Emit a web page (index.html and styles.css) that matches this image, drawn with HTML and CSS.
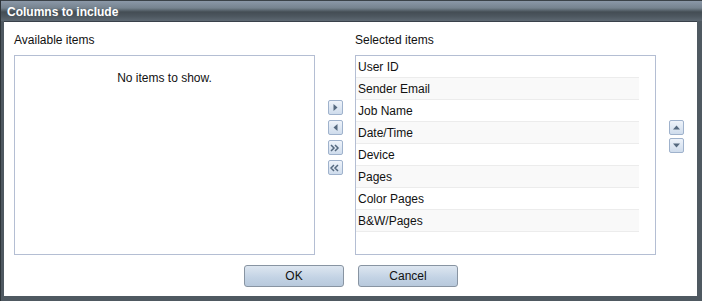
FILE: index.html
```html
<!DOCTYPE html>
<html lang="en">
<head>
    <meta charset="UTF-8">
    <title>Columns to include</title>
    <link rel="stylesheet" href="styles.css">
</head>
<body>

    <div class="dialog">
        <div class="titlebar">Columns to include</div>

        <div class="content">
            <div class="columns">
                <div class="col">
                    <div class="label">Available items</div>
                    <div class="list">
                        <div class="empty">No items to show.</div>
                    </div>
                </div>

                <div class="move-btns">
                    <button class="tool-btn" title="Add">
                        <svg width="7" height="9" viewBox="0 0 7 9"><path d="M1.5 1 L5.5 4.5 L1.5 8 Z" fill="#55697f"/></svg>
                    </button>
                    <button class="tool-btn" title="Remove">
                        <svg width="7" height="9" viewBox="0 0 7 9"><path d="M5.5 1 L1.5 4.5 L5.5 8 Z" fill="#55697f"/></svg>
                    </button>
                    <button class="tool-btn" title="Add all">
                        <svg width="10" height="8" viewBox="0 0 10 8"><path d="M1 1 L4 4 L1 7 M5 1 L8 4 L5 7" fill="none" stroke="#55697f" stroke-width="1.5"/></svg>
                    </button>
                    <button class="tool-btn" title="Remove all">
                        <svg width="10" height="8" viewBox="0 0 10 8"><path d="M4 1 L1 4 L4 7 M8 1 L5 4 L8 7" fill="none" stroke="#55697f" stroke-width="1.5"/></svg>
                    </button>
                </div>

                <div class="col">
                    <div class="label">Selected items</div>
                    <div class="list">
                        <div class="row">User ID</div>
                        <div class="row">Sender Email</div>
                        <div class="row">Job Name</div>
                        <div class="row">Date/Time</div>
                        <div class="row">Device</div>
                        <div class="row">Pages</div>
                        <div class="row">Color Pages</div>
                        <div class="row">B&amp;W/Pages</div>
                    </div>
                </div>

                <div class="order-btns">
                    <button class="tool-btn" title="Move up">
                        <svg width="9" height="7" viewBox="0 0 9 7"><path d="M1 5.5 L4.5 1.5 L8 5.5 Z" fill="#55697f"/></svg>
                    </button>
                    <button class="tool-btn" title="Move down">
                        <svg width="9" height="7" viewBox="0 0 9 7"><path d="M1 1.5 L4.5 5.5 L8 1.5 Z" fill="#55697f"/></svg>
                    </button>
                </div>
            </div>

            <div class="footer">
                <button class="btn">OK</button>
                <button class="btn">Cancel</button>
            </div>
        </div>
    </div>

</body>
</html>
```

FILE: styles.css
```css
body {
    margin: 0;
    font-family: "Liberation Sans", Arial, sans-serif;
    font-size: 12px;
    background: #6b747c;
}
.dialog {
    width: 702px;
    height: 301px;
    box-sizing: border-box;
    background: #4f5961;
    border-left: 1px solid #2e353a;
    padding: 0 5px 5px 3px;
    display: flex;
    flex-direction: column;
}
.titlebar {
    height: 21px;
    line-height: 22px;
    margin: 0 -5px 0 -3px;
    padding-left: 6px;
    color: #fff;
    font-weight: bold;
    font-size: 12px;
    background: linear-gradient(#8b98a8 0%, #76838f 35%, #444d54 55%, #4c565e 75%, #5d6872 100%);
    border-top: 1px solid #3b4248;
    box-sizing: border-box;
}
.content {
    flex: 1;
    background: #fff;
    border-top: 1px solid #39414a;
    display: flex;
    flex-direction: column;
}
.columns {
    display: flex;
    padding: 11px 0 0 10px;
}
.col {
    width: 301px;
}
.label {
    height: 14px;
    line-height: 14px;
    margin-bottom: 8px;
    color: #111;
}
.list {
    height: 200px;
    box-sizing: border-box;
    border: 1px solid #b4bed3;
    background: #fff;
    padding-right: 16px;
}
.empty {
    text-align: center;
    padding-top: 15px;
    margin-right: -16px;
    color: #111;
}
.row {
    height: 22px;
    line-height: 22px;
    box-sizing: border-box;
    padding-left: 2px;
    border-bottom: 1px solid #ececec;
    color: #111;
}
.row:nth-child(even) {
    background: #f9f9f9;
}
.move-btns {
    width: 40px;
    display: flex;
    flex-direction: column;
    align-items: center;
    gap: 5px;
    padding-top: 67px;
}
.order-btns {
    display: flex;
    flex-direction: column;
    gap: 3px;
    padding: 87px 0 0 13px;
}
.tool-btn {
    width: 15px;
    height: 15px;
    padding: 0;
    border: 1px solid #9fb2cc;
    border-radius: 2px;
    background: linear-gradient(#eef3fa, #cfdcec);
    display: flex;
    align-items: center;
    justify-content: center;
    cursor: pointer;
}
.footer {
    display: flex;
    justify-content: center;
    gap: 14px;
    margin-top: 10px;
    padding-left: 1px;
}
.btn {
    width: 100px;
    height: 22px;
    padding: 0;
    font-family: "Liberation Sans", Arial, sans-serif;
    font-size: 12px;
    color: #111;
    border: 1px solid #8894a2;
    border-radius: 3px;
    background: linear-gradient(#dde6f0, #c2d2e4 60%, #b8c9dc);
    cursor: pointer;
}
.btn:hover {
    background: linear-gradient(#e8eef6, #cbd9ea);
}
```
